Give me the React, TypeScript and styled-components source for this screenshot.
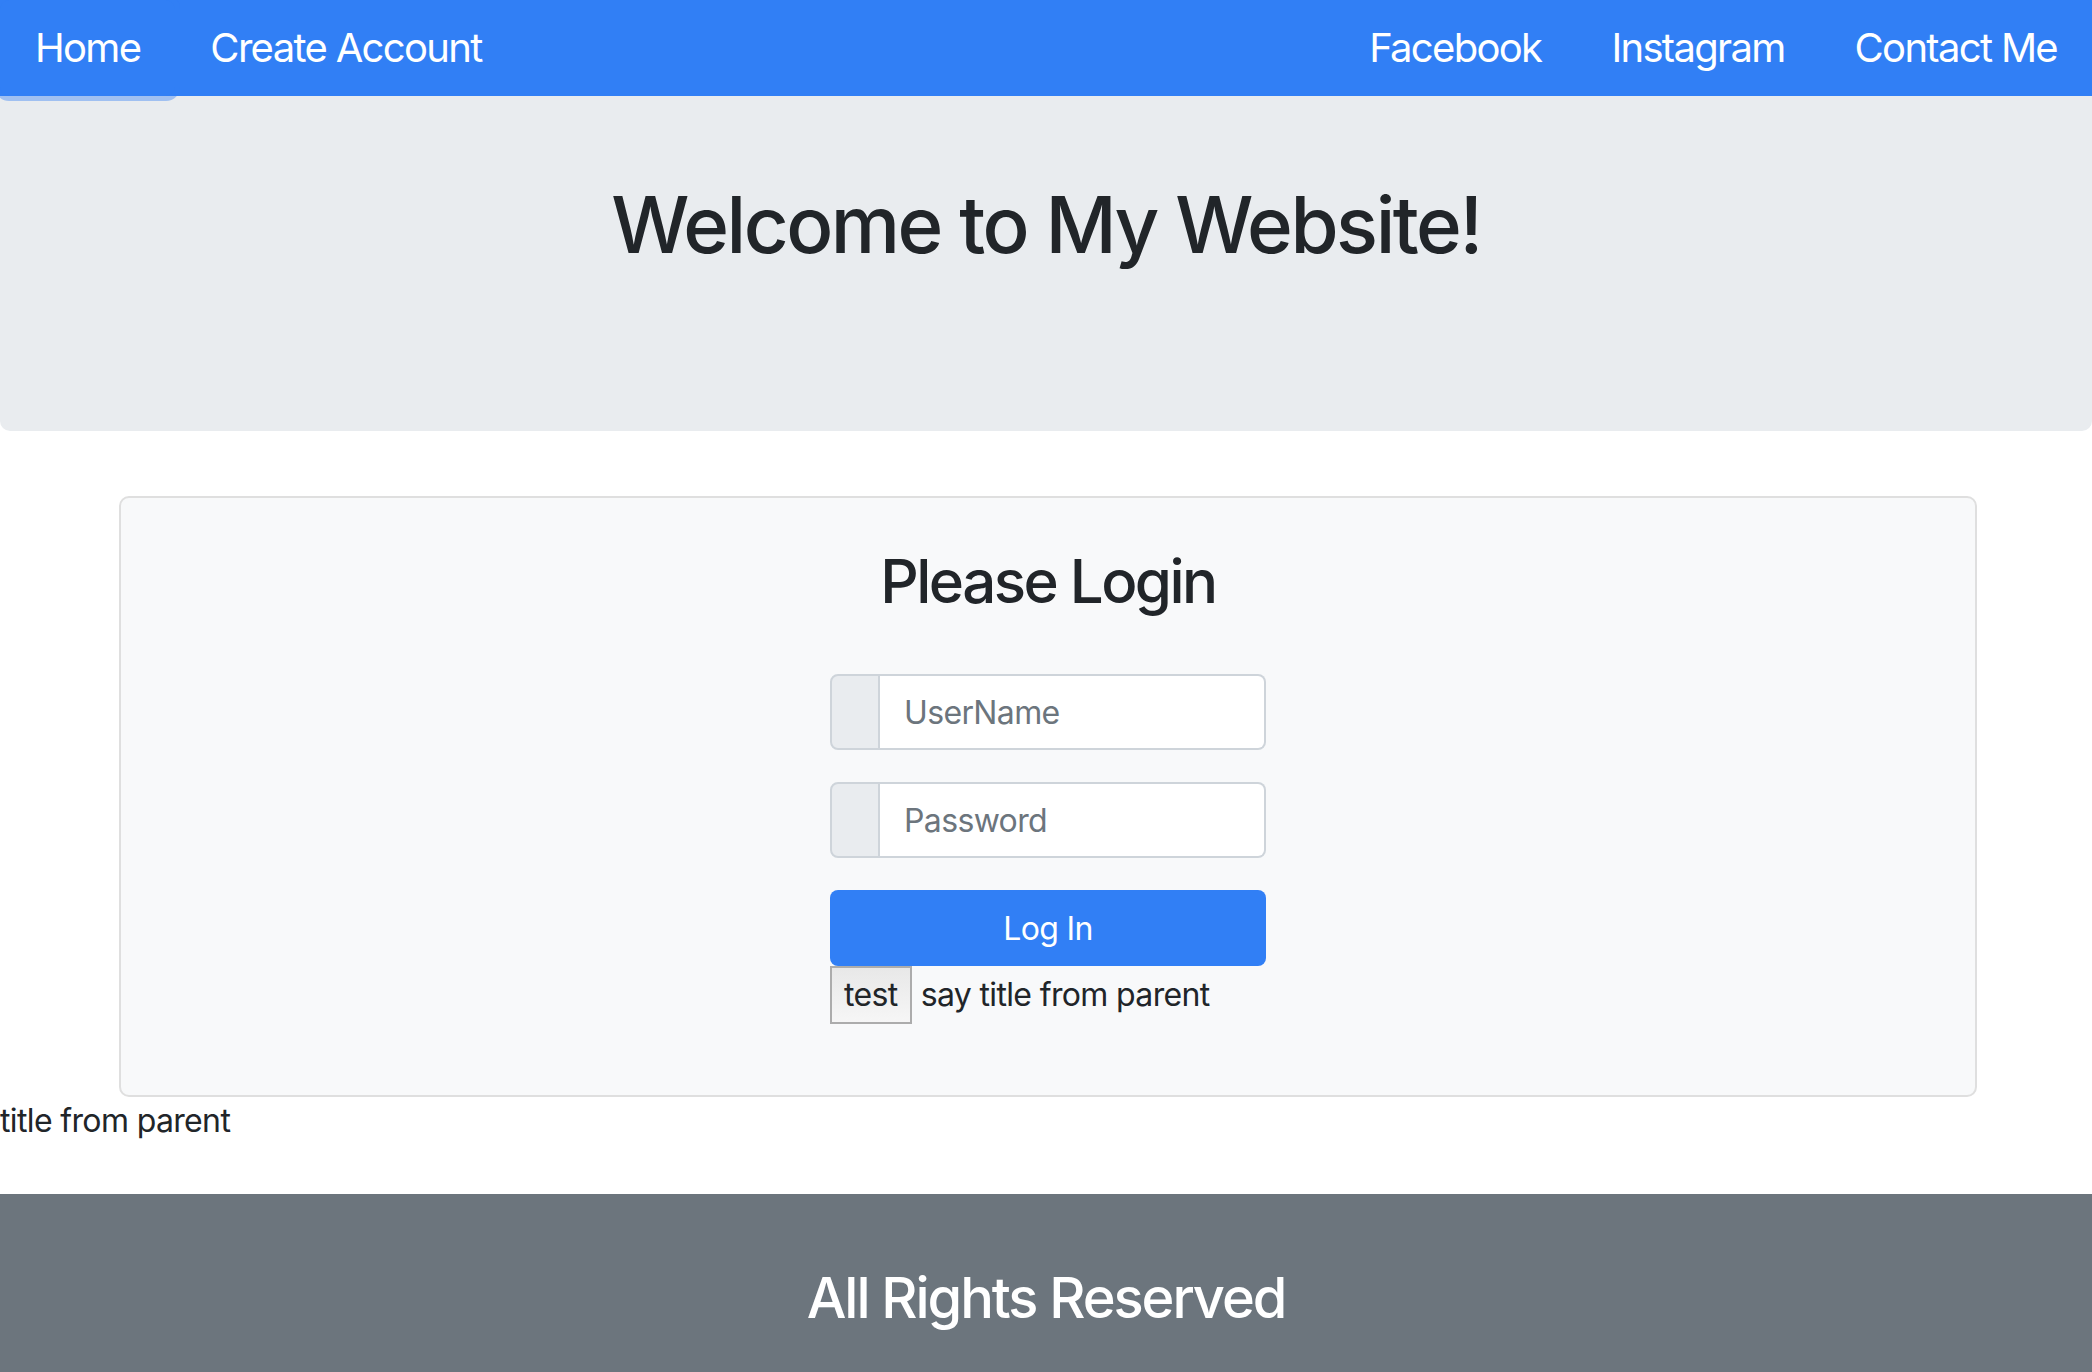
import React from "react";
import styled, { createGlobalStyle } from "styled-components";

const GlobalStyle = createGlobalStyle`
  html, body { margin: 0; padding: 0; background: #ffffff; }
  body {
    font-family: Inter, "Noto Sans", "Liberation Sans", sans-serif;
    font-size: 32px;
    line-height: 1.5;
    letter-spacing: -0.02em;
    color: #212529;
  }
  * { box-sizing: border-box; }
`;

const Navbar = styled.nav`
  display: flex;
  align-items: stretch;
  height: 96px;
  background: #317ff5;
  position: relative;
  z-index: 2;
`;

const NavGroup = styled.div<{ $right?: boolean }>`
  display: flex;
  align-items: stretch;
  margin-left: ${(p) => (p.$right ? "auto" : "0")};
`;

const NavLink = styled.a<{ $active?: boolean }>`
  display: flex;
  align-items: center;
  padding: 0 35px;
  font-size: 40px;
  letter-spacing: -0.042em;
  color: #ffffff;
  text-decoration: none;
  border-radius: ${(p) => (p.$active ? "9px" : "0")};
  box-shadow: ${(p) => (p.$active ? "0 0 0 5px rgba(49, 127, 245, 0.4)" : "none")};
`;

const Jumbotron = styled.header`
  background: #e9ecef;
  padding: 81px 32px 158px;
  border-radius: 0 0 10px 10px;
  text-align: center;
`;

const Title = styled.h1`
  margin: 0;
  font-size: 78px;
  font-weight: 500;
  line-height: 96px;
  letter-spacing: -0.032em;
`;

const Card = styled.section`
  margin: 65px 115px 0 119px;
  background: #f8f9fa;
  border: 2px solid #dfdfdf;
  border-radius: 10px;
  padding: 45px 0 71px;
`;

const CardTitle = styled.h2`
  margin: 0 0 54px;
  font-size: 60px;
  font-weight: 500;
  line-height: 77px;
  letter-spacing: -0.042em;
  text-align: center;
`;

const Form = styled.form`
  width: 436px;
  margin: 0 auto;
  display: flex;
  flex-direction: column;
`;

const InputGroup = styled.div`
  display: flex;
  height: 76px;
  margin-bottom: 32px;
`;

const Addon = styled.span`
  width: 50px;
  background: #e9ecef;
  border: 2px solid #ced4da;
  border-radius: 8px 0 0 8px;
`;

const Input = styled.input`
  flex: 1;
  min-width: 0;
  border: 2px solid #ced4da;
  border-left: 0;
  border-radius: 0 8px 8px 0;
  background: #ffffff;
  padding: 0 24px;
  font-family: inherit;
  font-size: 32px;
  letter-spacing: -0.02em;
  color: #495057;
  outline: none;
  &::placeholder { color: #6c757d; opacity: 1; }
`;

const PrimaryButton = styled.button`
  height: 76px;
  border: 0;
  border-radius: 8px;
  background: #317ff5;
  color: #ffffff;
  font-family: inherit;
  font-size: 32px;
  letter-spacing: -0.02em;
  cursor: pointer;
`;

const TestRow = styled.div`
  display: flex;
  align-items: baseline;
  gap: 9px;
  white-space: nowrap;
`;

const PlainButton = styled.button`
  height: 58px;
  padding: 0 12px;
  border: 2px solid #acacac;
  border-radius: 0;
  background: linear-gradient(#e8e8e8, #f6f6f6);
  font-family: inherit;
  font-size: 32px;
  letter-spacing: -0.02em;
  line-height: 1.5;
  color: #212529;
`;

const Caption = styled.p`
  margin: 0 0 49px;
`;

const Footer = styled.footer`
  background: #6c757d;
  padding: 71px 0 80px;
  text-align: center;
`;

const FooterText = styled.h3`
  margin: 0;
  font-size: 56px;
  font-weight: 500;
  line-height: 67px;
  letter-spacing: -0.037em;
  color: #ffffff;
`;

export default function App() {
  return (
    <>
      <GlobalStyle />
      <Navbar>
        <NavGroup>
          <NavLink $active>Home</NavLink>
          <NavLink>Create Account</NavLink>
        </NavGroup>
        <NavGroup $right>
          <NavLink>Facebook</NavLink>
          <NavLink>Instagram</NavLink>
          <NavLink>Contact Me</NavLink>
        </NavGroup>
      </Navbar>
      <Jumbotron>
        <Title>Welcome to My Website!</Title>
      </Jumbotron>
      <Card>
        <CardTitle>Please Login</CardTitle>
        <Form onSubmit={(e) => e.preventDefault()}>
          <InputGroup>
            <Addon />
            <Input placeholder="UserName" />
          </InputGroup>
          <InputGroup>
            <Addon />
            <Input type="password" placeholder="Password" />
          </InputGroup>
          <PrimaryButton type="submit">Log In</PrimaryButton>
          <TestRow>
            <PlainButton type="button">test</PlainButton>
            <span>say title from parent</span>
          </TestRow>
        </Form>
      </Card>
      <Caption>title from parent</Caption>
      <Footer>
        <FooterText>All Rights Reserved</FooterText>
      </Footer>
    </>
  );
}
